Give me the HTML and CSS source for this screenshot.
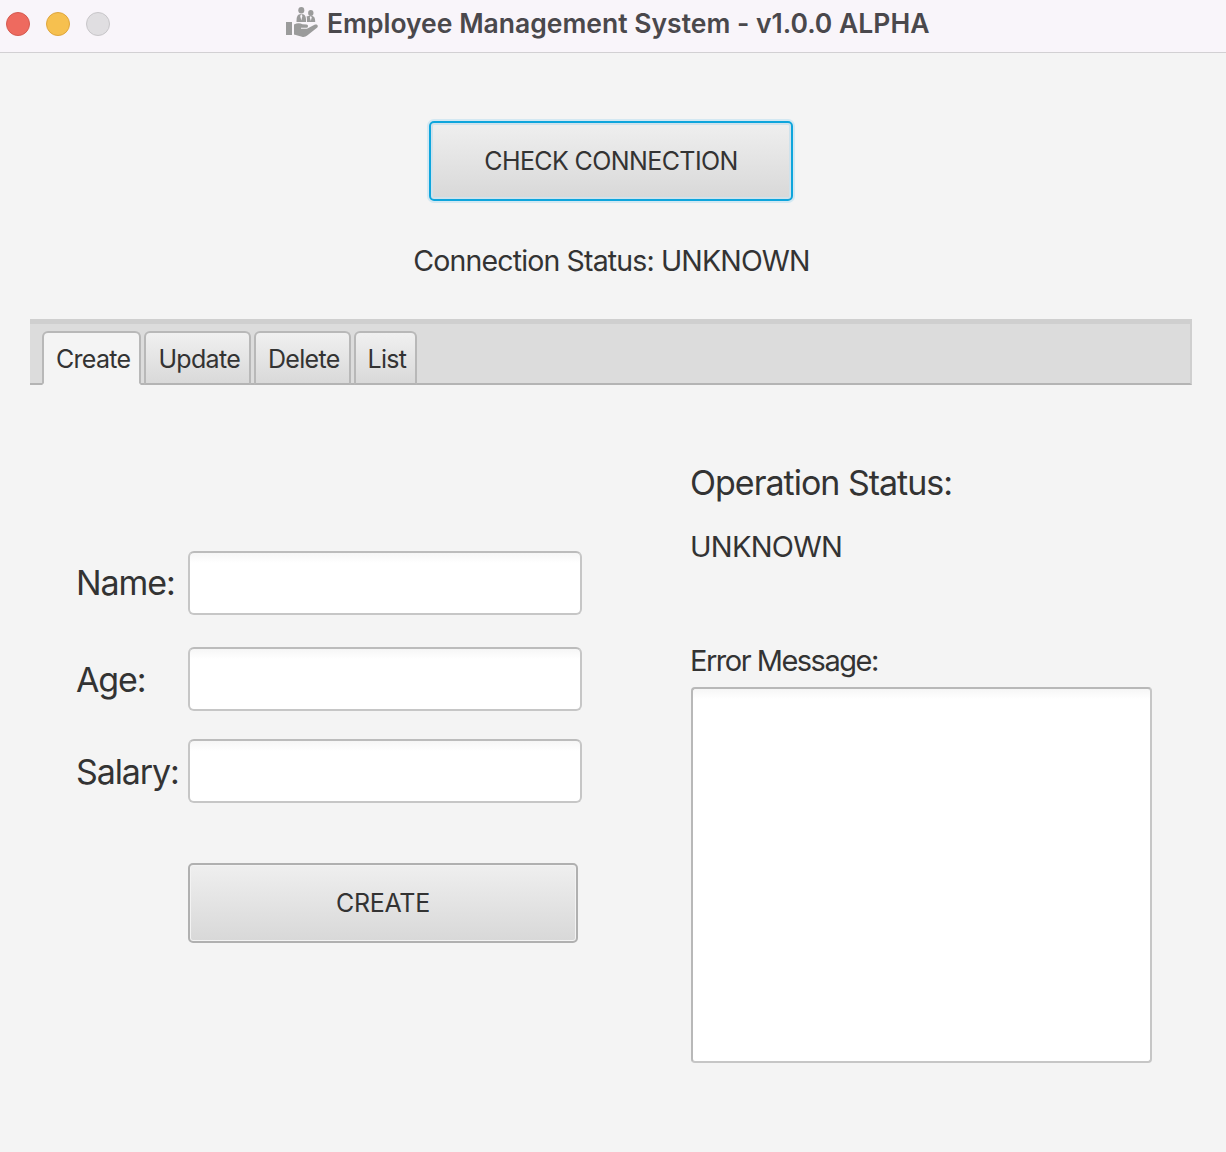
FILE: index.html
```html
<!DOCTYPE html>
<html lang="en">

<head>
    <meta charset="UTF-8">
    <meta name="viewport" content="width=device-width, initial-scale=1.0">
    <title>Employee Management System</title>
    <link rel="stylesheet" href="styles.css">
</head>

<body>
    <header class="title-bar">
        <div class="traffic-lights">
            <span class="light light-close"></span>
            <span class="light light-min"></span>
            <span class="light light-max"></span>
        </div>
        <div class="window-title">
            <svg class="app-icon" width="34" height="32" viewBox="0 0 34 32">
                <g fill="#9b9b9b">
                    <ellipse cx="16.300" cy="3.200" rx="3" ry="3.200"/>
                    <path d="M11.500 15c0-5 .5-8 4.800-8s4.800 3 4.800 8z"/>
                    <ellipse cx="25.800" cy="6" rx="2.700" ry="3"/>
                    <path d="M22 15c0-3 0-4.500 -.5-5.500 1-.5 2.800-.7 4.300-.7 3.500 0 4.400 2.200 4.400 6.200z"/>
                    <rect x="1" y="15" width="6" height="13"/>
                    <path d="M9 17.500c3-1.600 6-1.800 8.500-.3l4 .3c2 .2 2 3.200 0 3.300h-5.500v1h6l7.500-4c2.500-1.200 4.500 1 2.500 3l-9.500 7.500c-2 1.500-3.500 2-5.500 1.500l-8-2.300z"/>
                </g>
                <path d="M16.300 7l-1.100 2 1.100 4.500 1.100-4.500z" fill="#f9f5fa"/>
                <path d="M25.800 8.800l-.9 1.700.9 3.500.9-3.500z" fill="#f9f5fa"/>
            </svg>
            <span>Employee Management System - v1.0.0 ALPHA</span>
        </div>
    </header>

    <main class="content">
        <div class="connection">
            <button class="btn btn-check">CHECK CONNECTION</button>
            <div class="connection-status">Connection Status: UNKNOWN</div>
        </div>

        <nav class="tab-bar">
            <div class="tab tab-active">Create</div>
            <div class="tab">Update</div>
            <div class="tab">Delete</div>
            <div class="tab">List</div>
        </nav>

        <section class="tab-body">
            <div class="form">
                <div class="form-row row-name">
                    <label for="name">Name:</label>
                    <input type="text" id="name">
                </div>
                <div class="form-row row-age">
                    <label for="age">Age:</label>
                    <input type="text" id="age">
                </div>
                <div class="form-row row-salary">
                    <label for="salary">Salary:</label>
                    <input type="text" id="salary">
                </div>
                <button class="btn btn-create">CREATE</button>
            </div>

            <div class="status-panel">
                <div class="op-title">Operation Status:</div>
                <div class="op-value">UNKNOWN</div>
                <label class="error-label" for="error">Error Message:</label>
                <textarea id="error"></textarea>
            </div>
        </section>
    </main>
</body>
</html>
```

FILE: styles.css
```css
/* Page */
html, body {
margin: 0;
padding: 0;
}

body {
width: 1226px;
height: 1152px;
overflow: hidden;
background: #f4f4f4;
color: #333;
font-family: Inter, "Liberation Sans", sans-serif;
}

/* Window title bar */
.title-bar {
display: flex;
align-items: center;
box-sizing: content-box;
height: 48px;
padding-bottom: 4px;
background: #f9f5fa;
border-bottom: 1px solid #d2d0d3;
}

.traffic-lights {
display: flex;
gap: 16px;
margin-left: 6px;
}

.light {
box-sizing: border-box;
width: 24px;
height: 24px;
border-radius: 50%;
}

.light-close {
background: #ee6a5f;
border: 1px solid #d55a50;
}

.light-min {
background: #f6c04f;
border: 1px solid #dfa63d;
}

.light-max {
background: #e0dee1;
border: 1px solid #c8c6c9;
}

.window-title {
display: flex;
align-items: center;
gap: 8px;
margin-left: 175px;
margin-bottom: 2px;
font-size: 26.5px;
font-weight: 600;
color: #4a484c;
white-space: nowrap;
}

/* Buttons */
.btn {
display: block;
box-sizing: border-box;
font-family: inherit;
font-size: 25px;
color: #333;
letter-spacing: -0.6px;
background: linear-gradient(#efefef, #d8d8d8);
border: 2px solid #b0b0b0;
border-radius: 5px;
box-shadow: inset 0 0 0 1px #f3f3f3;
}

/* Top connection area */
.connection {
display: flex;
flex-direction: column;
align-items: center;
padding-top: 68px;
}

.btn-check {
width: 364px;
height: 80px;
margin-left: -4px;
border-color: #0ea5dc;
box-shadow: 0 0 0 2px #d3e8f2, inset 0 0 0 2px #cfe2ec;
}

.connection-status {
margin-top: 42px;
margin-left: -3px;
font-size: 28.5px;
line-height: 36px;
letter-spacing: -0.85px;
}

/* Tabs */
.tab-bar {
display: flex;
align-items: flex-end;
gap: 3px;
box-sizing: border-box;
height: 66px;
margin: 40px 34px 0 30px;
padding-left: 12px;
background: #dcdcdc;
border-top: 5px solid #cfcfcf;
border-right: 2px solid #cfcfcf;
border-bottom: 2px solid #b4b4b4;
}

.tab {
box-sizing: border-box;
height: 54px;
padding: 0 9px 0 12px;
margin-bottom: -2px;
font-size: 25px;
line-height: 52px;
letter-spacing: -0.7px;
background: linear-gradient(#f0f0f0, #d9d9d9);
border: 2px solid #b8b8b8;
border-bottom: 2px solid #b4b4b4;
border-radius: 6px 6px 0 0;
}

.tab-active {
background: #f4f4f4;
border-bottom-color: #f4f4f4;
}

/* Tab content */
.tab-body {
display: flex;
padding-left: 76px;
}

.form {
width: 614px;
padding-top: 166px;
}

.form-row {
display: flex;
align-items: center;
}

.row-age {
margin-top: 32px;
}

.row-salary {
margin-top: 28px;
}

.form-row label {
width: 112px;
font-size: 34px;
letter-spacing: -1.1px;
white-space: nowrap;
}

.row-name label {
margin-bottom: 2px;
}

input[type="text"] {
box-sizing: border-box;
width: 394px;
height: 64px;
background: linear-gradient(#f6f6f6, #fff 10px);
border: 2px solid #c6c6c6;
border-top-color: #bcbcbc;
border-radius: 6px;
}

.btn-create {
width: 390px;
height: 80px;
margin: 60px 0 0 112px;
letter-spacing: -0.3px;
}

/* Right panel */
.status-panel {
padding-top: 78px;
}

.op-title {
font-size: 34px;
line-height: 40px;
letter-spacing: -1px;
}

.op-value {
margin-top: 24px;
font-size: 29px;
line-height: 40px;
letter-spacing: -0.75px;
}

.error-label {
display: block;
margin-top: 76px;
font-size: 29px;
line-height: 36px;
letter-spacing: -1.5px;
}

textarea {
display: block;
box-sizing: border-box;
width: 461px;
height: 376px;
margin-top: 8px;
margin-left: 1px;
background: linear-gradient(#f6f6f6, #fff 10px);
border: 2px solid #c6c6c6;
border-top-color: #b8b8b8;
border-left-color: #b8b8b8;
border-radius: 4px;
resize: none;
}
```
